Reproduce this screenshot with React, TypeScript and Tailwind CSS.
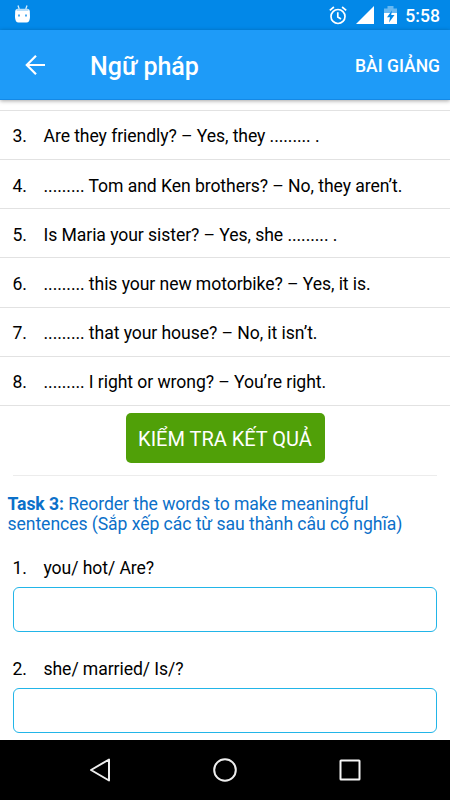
interface Question {
  id: number;
  text: string;
}

const questions: Question[] = [
  { id: 3, text: "Are they friendly? – Yes, they ......... ." },
  { id: 4, text: "......... Tom and Ken brothers? – No, they aren’t." },
  { id: 5, text: "Is Maria your sister? – Yes, she ......... ." },
  { id: 6, text: "......... this your new motorbike? – Yes, it is." },
  { id: 7, text: "......... that your house? – No, it isn’t." },
  { id: 8, text: "......... I right or wrong? – You’re right." },
];

const reorderTasks: Question[] = [
  { id: 1, text: "you/ hot/ Are?" },
  { id: 2, text: "she/ married/ Is/?" },
];

function StatusBar() {
  return (
    <div className="flex h-[30px] items-center bg-[#0288e8] pl-[14px] pr-[10px] text-white">
      <svg width="17" height="18" viewBox="0 0 17 18" className="mb-[2px]">
        <path d="M4 0.5L5.2 4M13 0.5L11.8 4" stroke="#d8edfc" strokeWidth="1.3" />
        <path
          d="M1.2 6Q1.4 4 3.6 4H13.4Q15.6 4 15.8 6L16 12Q15.8 17.5 12.5 17.5H4.5Q1.2 17.5 1 12Z"
          fill="#fff"
        />
        <path d="M3.2 3.7H13.8L14.5 6H2.5Z" fill="#b7def9" />
        <path d="M4 9.5H6V11.5H4ZM11 9.5H13V11.5H11Z" fill="#4aaaf0" />
      </svg>
      <div className="ml-auto flex items-center">
        <svg width="18" height="19" viewBox="0 0 18 19" fill="none" stroke="#fff" strokeWidth="1.7">
          <circle cx="9" cy="10.5" r="7" />
          <path d="M0.8 4.4L4.9 1M17.2 4.4L13.1 1M8.8 6.3V11L12 13" />
        </svg>
        <svg width="18" height="18" viewBox="0 0 18 18" className="ml-[9px]">
          <path d="M18 0V18H0Z" fill="#fff" />
        </svg>
        <svg width="13" height="18" viewBox="0 0 13 18" className="ml-[10px]">
          <path d="M0 2.5H3.5V0H9.5V2.5H13V7H0Z" fill="#67b8f2" />
          <path d="M0 7H13V18H0Z" fill="#fff" />
          <path d="M8 4.5L3 11.3H6L5 16.5L10.5 9H7.2Z" fill="#0288e8" />
        </svg>
        <span className="ml-[8px] pt-[2px] text-[17.6px] leading-[30px] font-medium">5:58</span>
      </div>
    </div>
  );
}

function AppBar() {
  return (
    <header className="relative z-10 flex h-[70px] items-center border-b border-[#1489e6] bg-[#1e9bf8] pr-[10px] pl-[25px] text-white shadow-[0_1px_4px_rgba(0,0,0,0.35)]">
      <svg width="20" height="20" viewBox="0 0 20 20" fill="none" stroke="#fff" strokeWidth="2.2">
        <path d="M20 10H2M11 0.8L1.8 10L11 19.2" />
      </svg>
      <h1 className="ml-[45px] pt-[4px] text-[25px] leading-[30px] font-medium">Ngữ pháp</h1>
      <button className="ml-auto pt-[2px] text-[17.5px] leading-6 font-medium">BÀI GIẢNG</button>
    </header>
  );
}

function NavBar() {
  return (
    <nav className="flex h-[60px] shrink-0 items-center bg-black pl-[89px]">
      <svg width="22" height="24" viewBox="0 0 22 24" fill="none" stroke="#eee" strokeWidth="2">
        <path d="M20 1.5V22.5L2 12Z" strokeLinejoin="round" />
      </svg>
      <svg width="24" height="24" viewBox="0 0 24 24" fill="none" className="ml-[102px]">
        <circle cx="12" cy="12" r="10.8" stroke="#eee" strokeWidth="2" />
      </svg>
      <svg width="22" height="22" viewBox="0 0 22 22" fill="none" className="ml-[102px]">
        <rect x="1.5" y="1.5" width="19" height="19" rx="0.5" stroke="#f5f5f5" strokeWidth="2" />
      </svg>
    </nav>
  );
}

export default function App() {
  return (
    <div className="flex h-[800px] w-[450px] flex-col overflow-hidden bg-white font-['Roboto',sans-serif] text-black">
      <StatusBar />
      <AppBar />

      <main className="min-h-0 flex-1 overflow-hidden pt-[10px]">
        <ul className="border-t border-[#e2e2e2] text-[17.6px] tracking-[-0.075px]">
          {questions.map((q) => (
            <li
              key={q.id}
              className="flex h-[49.17px] items-center border-b border-[#e2e2e2] pt-[3px] pl-[12.5px]"
            >
              <span className="w-[31px]">{q.id}.</span>
              <span className="whitespace-nowrap">{q.text}</span>
            </li>
          ))}
        </ul>

        <div className="mx-[13px] flex h-[70px] justify-center border-b border-[#ececec] pt-[7px]">
          <button className="h-[50px] w-[199px] rounded-[5px] bg-[#50a008] pt-[2px] text-[20px] whitespace-nowrap text-white">
            KIỂM TRA KẾT QUẢ
          </button>
        </div>

        <p className="mt-[18px] px-[7.5px] text-[17.6px] leading-[20px] tracking-[-0.065px] text-[#0b70c9]">
          <strong className="font-bold">Task 3:</strong> Reorder the words to make meaningful
          <br />
          sentences (Sắp xếp các từ sau thành câu có nghĩa)
        </p>

        <div className="mt-[23px] px-[12.5px] text-[17.6px] tracking-[-0.075px]">
          {reorderTasks.map((task) => (
            <div key={task.id} className="h-[101px]">
              <label className="flex h-[30px] items-start leading-[23px]">
                <span className="w-[31px]">{task.id}.</span>
                <span>{task.text}</span>
              </label>
              <input className="block h-[45px] w-[424.5px] rounded-[6px] border border-[#22b5e8] px-3 outline-none" />
            </div>
          ))}
        </div>
      </main>

      <NavBar />
    </div>
  );
}
